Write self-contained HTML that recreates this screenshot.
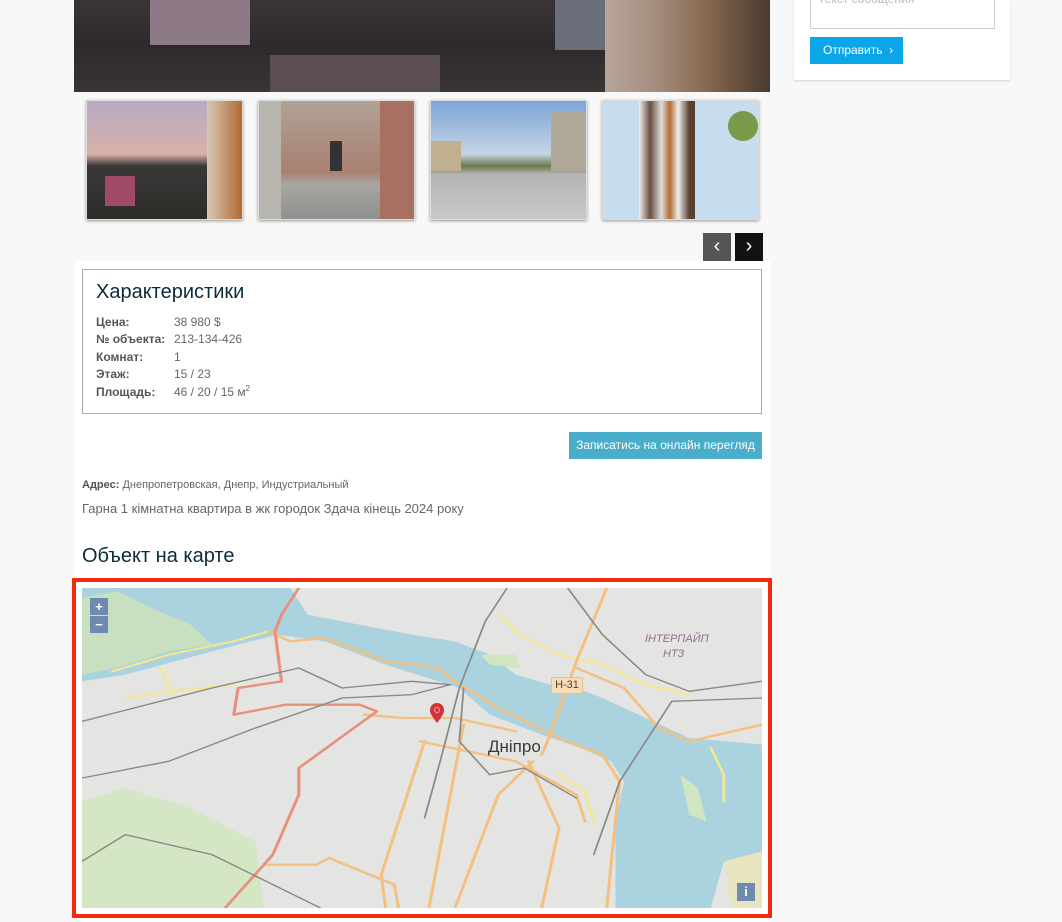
<!DOCTYPE html>
<html><head><meta charset="utf-8"><style>
html,body{margin:0;width:1062px;height:922px;overflow:hidden}
body{background:#f8f8f8;font-family:"Liberation Sans",Arial,sans-serif;position:relative}
.abs{position:absolute}
.thumb{position:absolute;top:100px;width:155px;height:118px;border:1px solid #ddd;box-shadow:0 1px 3px rgba(0,0,0,.4);overflow:hidden}
.thumb div{position:absolute}
.tbl td{font-size:12px;color:#666;padding:0;height:17.5px}
.tbl td:first-child{font-weight:bold;color:#555;width:78px}
</style></head><body>
<div class="abs" style="left:74px;top:0;width:696px;height:92px;background:linear-gradient(180deg,#3a3436 0%,#2e2a2c 50%,#3a3434 100%)"></div>
<div class="abs" style="left:150px;top:0;width:100px;height:45px;background:#8e7a86"></div>
<div class="abs" style="left:270px;top:55px;width:170px;height:37px;background:#5a4e50"></div>
<div class="abs" style="left:555px;top:0;width:50px;height:50px;background:#6a6e7a"></div>
<div class="abs" style="left:605px;top:0;width:165px;height:92px;background:linear-gradient(90deg,#b8a49a 0%,#a48e80 30%,#8a6a50 60%,#4a3a30 100%)"></div>
<div class="abs" style="left:794px;top:0;width:216px;height:80px;background:#fff;box-shadow:0 1px 2px rgba(0,0,0,.15)"></div>
<div class="abs" style="left:810px;top:0;width:183px;height:28px;border:1px solid #ccc;border-top:none;background:#fff"></div>
<div class="abs" style="left:818px;top:-8px;font-size:12px;color:#bbb">Текст сообщения</div>
<div class="abs" style="left:810px;top:37px;width:93px;height:27px;background:#0aa6e8;color:#fff;font-size:12px;line-height:27px;text-indent:13px">Отправить &nbsp;›</div>
<div class="thumb" style="left:86px;background:linear-gradient(180deg,#b8aac4 0%,#d8b0a8 45%,#3a3838 55%,#2e2c28 100%)"><div style="left:120px;top:0;width:35px;height:118px;background:linear-gradient(90deg,#d8c8b8,#b06a30)"></div><div style="left:18px;top:75px;width:30px;height:30px;background:#a04a6a"></div></div>
<div class="thumb" style="left:258px;background:linear-gradient(180deg,#b0a296 0%,#a88070 60%,#a8a6a2 70%,#909090 100%)"><div style="left:0;top:0;width:22px;height:118px;background:#b8b4ae"></div><div style="left:121px;top:0;width:34px;height:118px;background:#a87060"></div><div style="left:71px;top:40px;width:12px;height:30px;background:#333"></div></div>
<div class="thumb" style="left:430px;background:linear-gradient(180deg,#7ea4d8 0%,#c4d4e4 45%,#6a7a4a 55%,#b4b4b4 62%,#c8c8c8 100%)"><div style="left:120px;top:10px;width:35px;height:60px;background:#b0a898"></div><div style="left:0;top:40px;width:30px;height:30px;background:#c0b090"></div></div>
<div class="thumb" style="left:602px;background:#c8dcf0"><div style="left:36px;top:0;width:56px;height:118px;background:linear-gradient(90deg,#eee,#6a5040 20%,#ddd 40%,#b06a30 55%,#eee 70%,#5a4030 90%)"></div><div style="left:125px;top:10px;width:30px;height:30px;background:#7a9a4a;border-radius:50%"></div></div>
<div class="abs" style="left:703px;top:233px;width:28px;height:28px;background:#555;color:#fff;font-size:20px;text-align:center;line-height:27px">‹</div>
<div class="abs" style="left:735px;top:233px;width:28px;height:28px;background:#111;color:#fff;font-size:20px;text-align:center;line-height:27px">›</div>
<div class="abs" style="left:74px;top:261px;width:696px;height:661px;background:#fff"></div>
<div class="abs" style="left:82px;top:269px;width:678px;height:143px;border:1px solid #aaa"></div>
<div class="abs" style="left:96px;top:281px;font-size:20px;color:#0b2b3b">Характеристики</div>
<table class="tbl abs" style="left:96px;top:313px;border-collapse:collapse">
<tr><td>Цена:</td><td>38 980 $</td></tr>
<tr><td>№ объекта:</td><td>213-134-426</td></tr>
<tr><td>Комнат:</td><td>1</td></tr>
<tr><td>Этаж:</td><td>15 / 23</td></tr>
<tr><td>Площадь:</td><td>46 / 20 / 15 м<sup style="font-size:8px">2</sup></td></tr>
</table>
<div class="abs" style="left:569px;top:432px;width:193px;height:27px;background:#4aaecb;color:#fff;font-size:12px;line-height:27px;text-align:center">Записатись на онлайн перегляд</div>
<div class="abs" style="left:82px;top:479px;font-size:11px;color:#666"><b style="color:#555">Адрес:</b> Днепропетровская, Днепр, Индустриальный</div>
<div class="abs" style="left:82px;top:501px;font-size:13px;color:#666">Гарна 1 кімнатна квартира в жк городок Здача кінець 2024 року</div>
<div class="abs" style="left:82px;top:545px;font-size:20px;color:#0b2b3b">Объект на карте</div>
<div class="abs" style="left:72px;top:578px;width:692px;height:332px;border:4px solid #f5290c;background:#fff"></div>
<svg class="abs" style="left:82px;top:588px" width="680" height="320" viewBox="0 0 1568 960" preserveAspectRatio="none">
<rect width="1568" height="960" fill="#e4e4e2"/>
<path d="M0 640 100 600 250 660 400 760 420 960 0 960Z" fill="#d4e6c4"/>
<path d="M0 0 480 0 520 80 600 100 760 140 860 160 940 200 1000 260 1080 290 1140 300 1200 330 1300 390 1400 450 1568 470 1568 800 1480 820 1450 960 1230 960 1230 700 1250 580 1220 520 1150 480 1060 440 940 380 870 300 700 230 560 160 450 140 300 190 100 260 0 280Z" fill="#aad3df"/>
<path d="M0 30 80 10 160 60 250 110 300 170 200 190 80 240 0 260Z" fill="#c8e0c0"/>
<path d="M920 200 1000 200 1010 240 940 230Z" fill="#cfe6c0"/>
<path d="M1380 560 1420 600 1440 700 1400 680Z" fill="#cfe6c0"/>
<path d="M1480 820 1568 790 1568 960 1500 960Z" fill="#e8e4c0"/>
<g fill="none" stroke-linecap="round" stroke-linejoin="round">
<g stroke="#f6e78c" stroke-width="6">
<path d="M70 250 200 200 350 160 430 130"/><path d="M100 330 200 310 350 290"/><path d="M180 240 210 320"/>
<path d="M960 80 1010 140 1100 200 1200 230 1300 290 1400 320"/>
<path d="M1100 560 1160 610 1180 700"/><path d="M1450 480 1480 560 1480 640"/>
</g>
<g stroke="#f4c080" stroke-width="7">
<path d="M430 130 480 160 560 150 700 220 820 240 860 280 960 360 1100 450 1200 500 1240 580 1230 700 1210 960"/>
<path d="M1210 0 1140 220 1080 440 1060 500"/>
<path d="M1140 240 1250 300 1330 420 1400 460 1568 410"/>
<path d="M650 380 740 390 860 390 1000 430"/>
<path d="M790 460 690 860 700 960"/><path d="M880 410 800 960"/><path d="M1040 520 960 620 860 960"/>
<path d="M780 460 1000 520 1140 620 1160 700"/><path d="M420 830 540 830 570 810 720 890 730 960"/>
<path d="M1030 520 1100 720 1060 960"/>
</g>
<g stroke="#e8907a" stroke-width="7">
<path d="M500 0 460 80 445 130 460 280 360 300 350 380 470 350 640 350 680 370 500 540 500 620 440 800 330 960"/>
</g>
<g stroke="#888" stroke-width="4">
<path d="M0 400 120 360 300 300 500 240 600 300 760 280 850 290"/>
<path d="M0 570 200 520 400 420 600 330 760 320 850 290"/>
<path d="M0 820 100 740 300 800 550 960"/>
<path d="M980 0 930 100 870 300 830 500 790 690"/>
<path d="M1120 0 1200 140 1300 260 1400 310 1568 280"/>
<path d="M1568 330 1360 340 1300 460 1240 580 1180 800"/>
<path d="M880 300 870 460 940 560 1020 540 1140 630"/>
</g>
</g>
</svg>
<svg class="abs" style="left:429px;top:703px" width="16" height="20" viewBox="0 0 16 20"><path d="M8 20C2 12 1 10 1 7a7 7 0 0 1 14 0c0 3-1 5-7 13z" fill="#d2343a"/><circle cx="8" cy="7" r="2.5" fill="none" stroke="#f5a0a0"/></svg>
<div class="abs" style="left:488px;top:737px;font-size:17px;color:#3a3a3a">Дніпро</div>
<div class="abs" style="left:551px;top:677px;width:30px;height:15px;background:#f8dcb4;border:1px solid #e8c090;border-radius:2px;font-size:11px;line-height:15px;text-align:center;color:#444">H-31</div>
<div class="abs" style="left:645px;top:633px;font-size:11px;color:#9b6a8b;font-style:italic">ІНТЕРПАЙП</div>
<div class="abs" style="left:663px;top:648px;font-size:11px;color:#9b6a8b;font-style:italic">НТЗ</div>
<div class="abs" style="left:90px;top:598px;width:18px;height:17px;background:#6f8ab0;color:#fff;font-size:13px;text-align:center;line-height:17px;font-weight:bold">+</div>
<div class="abs" style="left:90px;top:616px;width:18px;height:17px;background:#6f8ab0;color:#fff;font-size:13px;text-align:center;line-height:17px;font-weight:bold">−</div>
<div class="abs" style="left:737px;top:883px;width:18px;height:18px;background:#6f8ab0;color:#fff;font-size:13px;text-align:center;line-height:18px;font-weight:bold">i</div>
</body></html>
